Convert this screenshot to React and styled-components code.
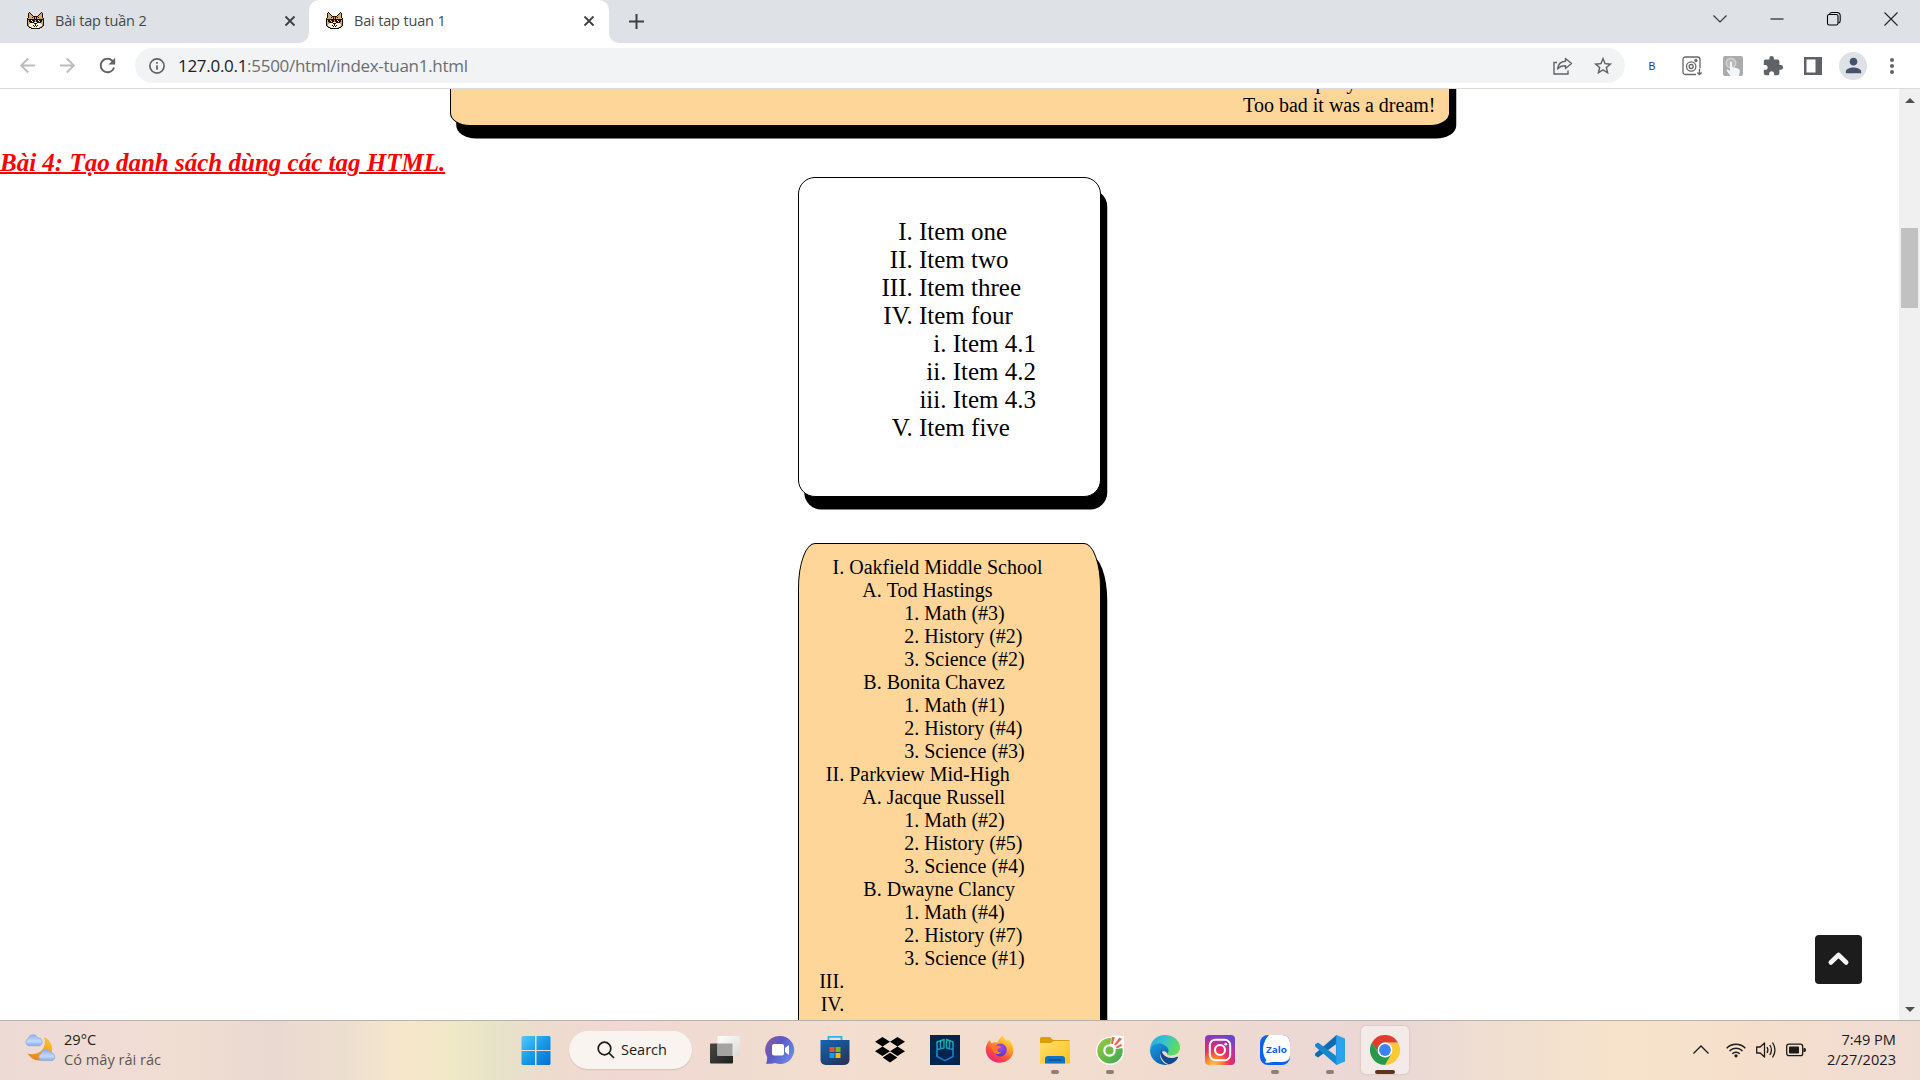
import React from "react";
import styled, { createGlobalStyle } from "styled-components";
import { MdArrowBack, MdArrowForward, MdRefresh, MdExtension, MdPerson, MdStarBorder } from "react-icons/md";

const GlobalStyle = createGlobalStyle`
  * { box-sizing: border-box; }
  html, body { margin: 0; padding: 0; overflow: hidden; background: #fff; }
`;

const ui = `"Open Sans", "Noto Sans", sans-serif`;
const serif = `"Liberation Serif", "Times New Roman", serif`;

const Screen = styled.div`
  width: 1920px;
  height: 1080px;
  display: flex;
  flex-direction: column;
  overflow: hidden;
  font-family: ${ui};
`;

/* ---------- browser tabs ---------- */

const TabStrip = styled.div`
  height: 43px;
  flex: none;
  display: flex;
  background: #dee1e6;
`;

const Tab = styled.div`
  width: ${(p) => p.$width}px;
  height: 43px;
  flex: none;
  display: flex;
  align-items: center;
  padding: 0 ${(p) => p.$end}px 2px ${(p) => p.$indent}px;
  border-radius: 10px 10px 0 0;
  background: ${(p) => (p.$active ? "#fff" : "transparent")};
`;

const TabTitle = styled.span`
  flex: 1;
  margin-left: 11px;
  font-size: 14.5px;
  letter-spacing: -0.16px;
  color: #45494d;
  white-space: nowrap;
`;

const TabFoot = styled.svg`
  width: 10px;
  height: 10px;
  flex: none;
  align-self: flex-end;
  display: block;
`;

const WindowButtons = styled.div`
  margin-left: auto;
  display: flex;
  align-items: center;
  height: 37px;
  gap: 43px;
  padding-right: 22px;
`;

const Glyph = styled.svg`
  display: block;
  flex: none;
  overflow: visible;
`;

const NewTab = styled.div`
  display: flex;
  align-items: center;
  padding: 0 0 1px 10px;
`;

/* ---------- toolbar ---------- */

const Toolbar = styled.div`
  height: 46px;
  flex: none;
  display: flex;
  align-items: center;
  background: #fff;
  border-bottom: 1px solid #dadbdd;
`;

const NavButtons = styled.div`
  width: 135px;
  display: flex;
  align-items: center;
  gap: 17px;
  padding-left: 16px;
  svg { display: block; width: 23px; height: 23px; }
`;

const Omnibox = styled.div`
  width: 1490px;
  height: 35px;
  display: flex;
  align-items: center;
  padding: 0 11px 0 14px;
  border-radius: 18px;
  background: #f1f3f4;
`;

const Address = styled.span`
  flex: 1;
  margin-left: 13px;
  font-size: 17px;
  letter-spacing: -0.29px;
  color: #6a6e73;
  white-space: nowrap;
  b { font-weight: 400; color: #202124; }
`;

const OmniActions = styled.div`
  display: flex;
  align-items: center;
  gap: 19px;
  color: #5f6368;
`;

const Extensions = styled.div`
  display: flex;
  align-items: center;
  margin-left: 18px;
  color: #5f6368;
`;

const Slot = styled.div`
  width: ${(p) => p.$width}px;
  display: flex;
  justify-content: center;
  align-items: center;
`;

const LetterIcon = styled.span`
  font: 400 10.5px "Liberation Sans", sans-serif;
  color: #2f28c8;
`;

const Avatar = styled.div`
  width: 28px;
  height: 28px;
  border-radius: 50%;
  display: flex;
  align-items: center;
  justify-content: center;
  background: #dee1e6;
  color: #47536a;
`;

/* ---------- page ---------- */

const Viewport = styled.div`
  flex: 1;
  min-height: 0;
  display: flex;
  overflow: hidden;
  background: #fff;
`;

const Page = styled.main`
  width: 1899px;
  display: flex;
  flex-direction: column;
  align-items: center;
  position: relative;
  font-family: ${serif};
  color: #000;
`;

const Panel = styled.section`
  flex: none;
  width: ${(p) => p.$width}px;
  height: ${(p) => p.$height}px;
  margin: ${(p) => p.$margin};
  padding: ${(p) => p.$pad};
  border: 1px solid #000;
  border-radius: ${(p) => p.$radius};
  background: ${(p) => p.$fill};
  box-shadow: 6.25px 12.5px #000;
`;

const Poem = styled.div`
  height: 100%;
  display: flex;
  flex-direction: column;
  justify-content: flex-end;
  text-align: right;
  font-size: 20px;
  line-height: 23px;
`;

const PoemLine = styled.span`
  padding-right: ${(p) => p.$inset || 0}px;
`;

const Heading = styled.h2`
  flex: none;
  align-self: flex-start;
  margin: 22px 0 0;
  height: 29px;
  font-size: 25px;
  line-height: 30px;
  font-style: italic;
  font-weight: 700;
  white-space: nowrap;
  color: #f00;
  text-decoration: underline;
  text-decoration-thickness: 2px;
`;

const List = styled.ol`
  margin: 0;
  padding-left: ${(p) => p.$indent}px;
  list-style-type: ${(p) => p.$marker};
  font-size: ${(p) => p.$size}px;
  line-height: ${(p) => p.$line}px;
  white-space: nowrap;
`;

const ScrollTrack = styled.div`
  width: 21px;
  flex: none;
  display: flex;
  flex-direction: column;
  align-items: center;
  padding: 9px 0 8px;
  background: #f0f0f0;
`;

const ScrollThumb = styled.div`
  width: 17px;
  height: 80px;
  margin: 125px 0 auto;
  background: #c1c1c1;
`;

const ToTop = styled.button`
  position: absolute;
  right: 37px;
  bottom: 36px;
  width: 47px;
  height: 49px;
  padding: 0 0 2px;
  border: 0;
  border-radius: 4px;
  display: flex;
  align-items: center;
  justify-content: center;
  background: #1c1c1c;
`;

/* ---------- taskbar ---------- */

const Taskbar = styled.footer`
  height: 60px;
  flex: none;
  display: flex;
  align-items: center;
  padding-bottom: 1px;
  border-top: 1px solid #bcb2ad;
  background: linear-gradient(90deg, #eedad5 0, #f0dcd5 110px, #f0ddd2 180px, #ead9d1 270px, #ecdecf 340px, #f6e7cc 400px, #f1e9c6 450px, #e7e3c8 495px, #eddcce 540px, #f1d8d3 620px, #f0dbd1 720px, #f3dece 880px, #f2dccf 1120px, #ecd8d4 1320px, #ead8d6 1400px, #f0dfd0 1500px, #f7e3cb 1620px, #f5dfcc 1760px, #efdcd4 1920px);
`;

const Weather = styled.div`
  width: 512px;
  display: flex;
  align-items: center;
  padding: 0 0 2px 25px;
  gap: 9px;
`;

const TwoLines = styled.div`
  display: flex;
  flex-direction: column;
  font-size: 14.6px;
  line-height: 20px;
  color: #1b1b1b;
  white-space: nowrap;
  text-align: ${(p) => p.$align || "left"};
`;

const Muted = styled.span`
  color: #5d5653;
`;

const Search = styled.div`
  width: 123px;
  height: 38px;
  margin: 0 9px 0 2px;
  display: flex;
  align-items: center;
  padding: 0 0 1px 28px;
  gap: 6px;
  border-radius: 19px;
  background: #faf4f1;
  box-shadow: 0 1px 1px rgba(150, 110, 100, 0.25);
  font-size: 14.5px;
  color: #1b1b1b;
`;

const App48 = styled.div`
  width: 48px;
  height: 48px;
  flex: none;
  margin-right: 7px;
  display: grid;
  grid-template-rows: 9px 30px 5px 4px;
  justify-items: center;
  border-radius: 5px;
  background: ${(p) => (p.$focused ? "#f4eae8" : "transparent")};
  box-shadow: ${(p) => (p.$focused ? "0 0 1px 1px rgba(200,180,175,0.35)" : "none")};
  svg { grid-row: 2; display: block; width: 30px; height: 30px; }
`;

const Running = styled.i`
  grid-row: 4;
  width: ${(p) => (p.$focused ? 20 : 8)}px;
  height: 4px;
  border-radius: 2px;
  background: ${(p) => (p.$focused ? "#5b3524" : "#8a7f7b")};
`;

const Tray = styled.div`
  margin-left: auto;
  display: flex;
  align-items: center;
  padding: 0 24px 2px 0;
`;

const TrayIcons = styled.div`
  display: flex;
  align-items: center;
  gap: 10px;
  margin: 2px 21px 0 0;
`;

const Overflow = styled.div`
  margin-right: 7px;
`;

/* ---------- drawings ---------- */

const catRows = [
  "..k...........k..",
  ".kok.........kok.",
  ".kook.......kook.",
  ".koook.....koook.",
  ".kooookkkkkooook.",
  ".koookokokokoook.",
  "kooooookokoooooook".slice(0, 16) + "k",
  "kkkkkkkkkkkkkkkkk",
  "kokkwkkkokkwkkkok",
  "kokkkwkkokkkwkkok",
  "kookkkkwwwkkkkook",
  "koswwwwkkkwwwwsok",
  "kswwwwwwkwwwwwwsk",
  "kswwwwkwkwkwwwwsk",
  ".kswwwwkwkwwwwsk.",
  "..kkswwwwwwwskk..",
  "....kkkkkkkkk....",
];
const catInk = { k: "#17150f", o: "#d8ab6d", w: "#f5efe2", s: "#b58a55" };

function Cat() {
  return (
    <Glyph width="17" height="17" viewBox="0 0 17 17" shapeRendering="crispEdges">
      {catRows.flatMap((row, y) =>
        [...row].map((c, x) =>
          c === "." ? null : <rect key={`${x}-${y}`} x={x} y={y} width="1" height="1" fill={catInk[c]} />
        )
      )}
    </Glyph>
  );
}

const CloseX = () => (
  <Glyph width="10" height="10" viewBox="0 0 10 10" stroke="#3c4043" strokeWidth="1.8">
    <path d="M0.5 0.5l9 9M9.5 0.5l-9 9" />
  </Glyph>
);

const Cloud = ({ x, y, s }) => (
  <g transform={`translate(${x} ${y}) scale(${s})`}>
    <path d="M4 11a3.7 3.7 0 0 1-.4-7A5 5 0 0 1 13 3.200a4 4 0 0 1 1.500 7.800z" fill="url(#cloud)" stroke="#84a6e6" strokeWidth=".7" />
  </g>
);

const WeatherIcon = () => (
  <Glyph width="30" height="30" viewBox="0 0 30 30">
    <defs>
      <linearGradient id="cloud" x1="0" y1="0" x2="0" y2="1">
        <stop offset="0" stopColor="#8fb2ee" />
        <stop offset=".6" stopColor="#c4dafb" />
        <stop offset="1" stopColor="#86a8ea" />
      </linearGradient>
      <linearGradient id="moon" x1="0" y1="1" x2=".5" y2="0">
        <stop offset="0" stopColor="#f07a12" />
        <stop offset="1" stopColor="#f3c02f" />
      </linearGradient>
    </defs>
    <path d="M19 3c7 3 10 11 7 17.500A14 14 0 0 1 2.500 19.500C8 21 14 20 17.500 15.500 20 12 20.500 7 19 3z" fill="url(#moon)" />
    <Cloud x={-0.5} y={0.5} s={1.02} />
    <Cloud x={12.5} y={15.6} s={1} />
  </Glyph>
);

const WindowsLogo = () => (
  <svg viewBox="0 0 30 30">
    <defs>
      <linearGradient id="win" gradientUnits="userSpaceOnUse" x1="0" y1="0" x2="29" y2="29">
        <stop offset="0" stopColor="#52d0fb" />
        <stop offset=".5" stopColor="#1c9be8" />
        <stop offset="1" stopColor="#0670cf" />
      </linearGradient>
    </defs>
    <path d="M1.500 1H14v14H.5V2zM15.500 1h13l1 1v13h-14zM.5 16H14v14H1.500l-1-1zM15.500 16h14v13l-1 1h-13z" fill="url(#win)" />
  </svg>
);

const TaskView = () => (
  <svg viewBox="0 0 30 30">
    <defs>
      <linearGradient id="tvd" x1="0" y1="0" x2="1" y2="1"><stop offset="0" stopColor="#484846" /><stop offset="1" stopColor="#20201f" /></linearGradient>
      <linearGradient id="tvl" x1="0" y1="0" x2="1" y2="1"><stop offset="0" stopColor="#fff" /><stop offset="1" stopColor="#dcd9d8" /></linearGradient>
    </defs>
    <rect x="0" y="8.500" width="23" height="20" rx="1" fill="url(#tvd)" />
    <rect x="7.500" y="1" width="22.500" height="20" rx="1" fill="url(#tvl)" />
    <rect x="7.500" y="8.500" width="15" height="12.500" fill="#a5a3a1" />
  </svg>
);

const Chat = () => (
  <svg viewBox="0 0 30 30">
    <defs>
      <linearGradient id="chat" x1="0" y1="0" x2="1" y2=".6"><stop offset="0" stopColor="#91569b" /><stop offset=".5" stopColor="#5a5bc4" /><stop offset="1" stopColor="#6a86e6" /></linearGradient>
    </defs>
    <path d="M15 1a14 14 0 1 1-5 27c-3 .8-6 1-9 .8 1-2.500 1.500-5 1-7A14 14 0 0 1 15 1z" fill="url(#chat)" />
    <rect x="7" y="9" width="12" height="11.500" rx="2" fill="#fff" />
    <path d="M20 13l4-3v10l-4-3z" fill="#fff" />
  </svg>
);

const Store = () => (
  <svg viewBox="0 0 30 30">
    <defs>
      <linearGradient id="store" x1="0" y1="0" x2=".6" y2="1"><stop offset="0" stopColor="#1068b8" /><stop offset="1" stopColor="#27365f" /></linearGradient>
    </defs>
    <path d="M8.500 6V1.800h13V6" fill="none" stroke="#27b6ee" strokeWidth="1.800" />
    <path d="M.5 5h29v20a5 5 0 0 1-5 5h-19a5 5 0 0 1-5-5z" fill="url(#store)" />
    <path d="M9.500 12h5v5h-5z" fill="#f25022" />
    <path d="M15.500 12h5v5h-5z" fill="#7fba00" />
    <path d="M9.500 18h5v5h-5z" fill="#00a4ef" />
    <path d="M15.500 18h5v5h-5z" fill="#ffb900" />
  </svg>
);

const Dropbox = () => (
  <svg viewBox="0 0 30 30">
    <path d="M7.500 2l7.500 4.700-7.500 4.700L0 6.700zM22.500 2L30 6.700l-7.500 4.700L15 6.700zM7.500 11.600l7.500 4.700L7.500 21 0 16.300zM22.500 11.600l7.500 4.700-7.500 4.700-7.500-4.700zM15 17.800l7.300 4.600L15 27.400l-7.300-5z" fill="#000" />
  </svg>
);

const GGShield = () => (
  <svg viewBox="0 0 30 30">
    <defs><linearGradient id="gg" gradientUnits="userSpaceOnUse" x1="0" y1="4" x2="0" y2="26"><stop offset="0" stopColor="#14b5a8" /><stop offset="1" stopColor="#1673d8" /></linearGradient></defs>
    <rect width="30" height="30" fill="#04254b" />
    <g fill="none" stroke="url(#gg)" strokeWidth="1.500" strokeLinejoin="round">
      <path d="M7 21V7l7-2.500v8.500L7 14.500" />
      <path d="M23 14.500L16.500 13V4.500L23 7v14.500l-8 4.200-8-4.200v-3l0 0M10.500 6v7.500M19.500 6v7.500" />
    </g>
  </svg>
);

const Firefox = () => (
  <svg viewBox="0 0 30 30">
    <defs>
      <linearGradient id="ff" x1=".85" y1="0" x2=".25" y2="1"><stop offset="0" stopColor="#fff14a" /><stop offset=".4" stopColor="#ffa02a" /><stop offset=".7" stopColor="#ff4a3f" /><stop offset="1" stopColor="#e3218a" /></linearGradient>
      <radialGradient id="ffg" cx=".5" cy=".3" r=".8"><stop offset="0" stopColor="#a64bf4" /><stop offset="1" stopColor="#4a39b8" /></radialGradient>
    </defs>
    <path d="M4.500 5l2 3.200c1.500-1 4-1.200 6-.9C13.500 5 15 3 18 0c.5 3 2 4 4 6l1-2c4 4 6 8 5.500 12.500A14 13.500 0 0 1 .8 16C.5 11.500 2 8 4.500 5z" fill="url(#ff)" />
    <circle cx="15.300" cy="15" r="6.400" fill="url(#ffg)" />
    <path d="M5 10.500c2.500-1.800 6-1.200 7.500.6l3.500.4c-.5 1.800-3 2-3.500 3.200-.3 1.500 1.500 2.800 3.500 2.500-1.500 2.500-6 2.500-7.500-.5-1-2-2-4-3.500-6.200z" fill="#ff7a2e" />
  </svg>
);

const Folder = () => (
  <svg viewBox="0 0 30 30">
    <defs><linearGradient id="fold" x1="0" y1="0" x2="1" y2="1"><stop offset="0" stopColor="#ffdf6b" /><stop offset="1" stopColor="#fcc21f" /></linearGradient></defs>
    <path d="M0 3.500Q0 2 1.500 2h8c1.500 0 2.500 3 4 3h15Q30 5 30 6.500V10H0z" fill="#dc9d06" />
    <path d="M0 8h10c2 0 2.500-2 4-2h16v21.500q0 1-1 1H1q-1 0-1-1z" fill="url(#fold)" />
    <path d="M5 28.500V24q0-3 3-3h14q3 0 3 3v4.500z" fill="#1173c8" />
    <path d="M8.500 25h13" stroke="#0b4a85" strokeWidth="1.200" />
  </svg>
);

const CocCoc = () => (
  <svg viewBox="0 0 30 30">
    <defs><linearGradient id="cc" x1="0" y1="0" x2="1" y2="1"><stop offset="0" stopColor="#9bcc3d" /><stop offset="1" stopColor="#37a854" /></linearGradient></defs>
    <circle cx="15" cy="16" r="14" fill="#fff" />
    <path d="M16 13l1-12.500 12 .5v13z" fill="#fff" />
    <circle cx="15" cy="15.800" r="12.700" fill="url(#cc)" />
    <path d="M14.500 15l2-14 12 0-.5 12z" fill="#fff" />
    <circle cx="14.500" cy="15.500" r="6.200" fill="#fff" />
    <circle cx="14.500" cy="15.500" r="4" fill="#6fba45" />
    <path d="M16 8.500l.8-6.500 3 .3-2 7zM19 9.500l5.500-7L27 4l-6.500 6.500zM20.800 12l5.400-3.200.8 2.200-5.200 2.500z" fill="#f0624d" />
  </svg>
);

const Edge = () => (
  <svg viewBox="0 0 30 30">
    <defs>
      <linearGradient id="e1" x1="0" y1="0" x2="1" y2=".4"><stop offset="0" stopColor="#2aa5dc" /><stop offset=".5" stopColor="#36c3cf" /><stop offset="1" stopColor="#5fdc5c" /></linearGradient>
      <linearGradient id="e2" x1="0" y1="0" x2=".6" y2="1"><stop offset="0" stopColor="#1b9de2" /><stop offset="1" stopColor="#0c5fae" /></linearGradient>
    </defs>
    <path d="M0 14C1 5 7 0 15 0c9 0 15 6 15 12.500 0 5-4 8-9 8-3 0-5-1-4-2.500C20 14 16 9 10 9c-5 0-8 2-10 5z" fill="url(#e1)" />
    <path d="M0 14.500C1.500 10 6 8 10 8.500c5 .5 8.500 4 8.500 7 0 1.500-.5 2.500-1.300 3C14 13 8 18 11 24c1.500 3 4 5 7 5.700C8 31.500-.5 24 0 14.500z" fill="url(#e2)" />
    <path d="M11.500 14.500C8.500 19 12 27 19 29.500c4-1 7.500-3.500 9-7 .3-.8-.5-1-1-.7-5 2.500-12 1-14.500-3.500-.7-1.300-1-2.500-1-3.800z" fill="#114a8b" />
  </svg>
);

const Insta = () => (
  <svg viewBox="0 0 30 30">
    <defs>
      <radialGradient id="ig" cx=".28" cy="1.05" r="1.100"><stop offset="0" stopColor="#ffd35a" /><stop offset=".25" stopColor="#fb8a33" /><stop offset=".5" stopColor="#e6305f" /><stop offset=".75" stopColor="#bb2f9b" /><stop offset="1" stopColor="#6747cf" /></radialGradient>
    </defs>
    <rect width="30" height="30" rx="4" fill="url(#ig)" />
    <rect x="4.800" y="4.800" width="20.400" height="20.400" rx="5.500" fill="none" stroke="#fff" strokeWidth="2" />
    <circle cx="15" cy="15" r="5" fill="none" stroke="#fff" strokeWidth="2.100" />
    <circle cx="20.800" cy="9.200" r="1.400" fill="#fff" />
  </svg>
);

const Zalo = () => (
  <svg viewBox="0 0 30 30">
    <rect width="30" height="30" rx="8" fill="#0b62f2" />
    <path d="M9 0h13a8 8 0 0 1 8 8v12q0 7-8 7H12c-2 .8-5 1.200-7 .3l1.500-2.300C2 21 1 8 9 0z" fill="#fff" />
    <text x="16.500" y="17.500" textAnchor="middle" fontFamily="Open Sans, sans-serif" fontWeight="700" fontSize="9.400" textLength="21" lengthAdjust="spacingAndGlyphs" fill="#0b62f2">Zalo</text>
  </svg>
);

const VSCode = () => (
  <svg viewBox="0 0 30 30">
    <path d="M22 8.500L3 22.500 0 20.500l.2-2L21.500 0z" fill="#0b6cb4" />
    <path d="M22 21.500L3 7.500 0 9.500l.2 2L21.500 30z" fill="#1587cf" />
    <path d="M21.500 0L30 3.500v23L21.500 30z" fill="#2ba2ee" />
    <path d="M21.500 0v30" stroke="#2496e2" strokeWidth="1.200" />
  </svg>
);

const Chrome = () => (
  <svg viewBox="0 0 30 30">
    <path d="M28 7.500A15 15 0 0 1 15 30L21.500 18.700 15 7.500z" fill="#fcc934" />
    <path d="M2 7.500A15 15 0 0 0 15 30l6.500-11.200-13-.1z" fill="#269a4a" />
    <path d="M2 7.500l6.500 11.200L15 15V7.500z" fill="#269a4a" />
    <path d="M2 7.500A15 15 0 0 1 28 7.500H15a7.500 7.500 0 0 0-7.300 5.600L6 13.500z" fill="#e33b2e" />
    <circle cx="15" cy="15" r="7.400" fill="#fff" />
    <circle cx="15" cy="15" r="5.900" fill="#3b83ee" />
  </svg>
);

const ScrollArrow = ({ down }) => (
  <Glyph width="10" height="5" viewBox="0 0 10 5" fill="#505050">
    <path d={down ? "M0 0h10L5 5z" : "M0 5h10L5 0z"} />
  </Glyph>
);

/* ---------- data ---------- */

const apps = [
  { icon: WindowsLogo },
  { icon: TaskView },
  { icon: Chat },
  { icon: Store },
  { icon: Dropbox },
  { icon: GGShield },
  { icon: Firefox },
  { icon: Folder, running: true },
  { icon: CocCoc, running: true },
  { icon: Edge },
  { icon: Insta },
  { icon: Zalo, running: true },
  { icon: VSCode, running: true },
  { icon: Chrome, running: true, focused: true },
];

const schools = [
  {
    name: "Oakfield Middle School",
    teachers: [
      ["Tod Hastings", ["Math (#3)", "History (#2)", "Science (#2)"]],
      ["Bonita Chavez", ["Math (#1)", "History (#4)", "Science (#3)"]],
    ],
  },
  {
    name: "Parkview Mid-High",
    teachers: [
      ["Jacque Russell", ["Math (#2)", "History (#5)", "Science (#4)"]],
      ["Dwayne Clancy", ["Math (#4)", "History (#7)", "Science (#1)"]],
    ],
  },
];

function TaskApp({ app }) {
  const Icon = app.icon;
  return (
    <App48 $focused={app.focused}>
      <Icon />
      {app.running && <Running $focused={app.focused} />}
    </App48>
  );
}

export default function App() {
  const [start, ...pinned] = apps;
  return (
    <Screen>
      <GlobalStyle />
      <TabStrip>
        <Tab $width={299} $indent={27} $end={4}>
          <Cat />
          <TabTitle>Bài tap tuần 2</TabTitle>
          <CloseX />
        </Tab>
        <TabFoot viewBox="0 0 10 10"><path d="M10 0v10H0A10 10 0 0 0 10 0z" fill="#fff" /></TabFoot>
        <Tab $active $width={300} $indent={17} $end={15}>
          <Cat />
          <TabTitle>Bai tap tuan 1</TabTitle>
          <CloseX />
        </Tab>
        <TabFoot viewBox="0 0 10 10"><path d="M0 0v10h10A10 10 0 0 1 0 0z" fill="#fff" /></TabFoot>
        <NewTab>
          <Glyph width="15" height="15" viewBox="0 0 15 15" stroke="#3c4043" strokeWidth="2">
            <path d="M7.500 0v15M0 7.500h15" />
          </Glyph>
        </NewTab>
        <WindowButtons>
          <Glyph width="14" height="14" viewBox="0 0 14 14" fill="none" stroke="#333" strokeWidth="1.100">
            <path d="M.5 3.500L7 10l6.500-6.500" />
          </Glyph>
          <Glyph width="14" height="14" viewBox="0 0 14 14" stroke="#000" strokeWidth="1">
            <path d="M.5 7h13" />
          </Glyph>
          <Glyph width="14" height="14" viewBox="0 0 14 14" fill="none" stroke="#000" strokeWidth="1.100">
            <rect x=".5" y="2.500" width="10.500" height="10.500" rx="1.800" />
            <path d="M2.500 2.300Q3 .5 5 .5h5Q13.200.5 13.200 3.800v5q0 2-1.800 2.500" />
          </Glyph>
          <Glyph width="14" height="14" viewBox="0 0 14 14" stroke="#222" strokeWidth="1.100">
            <path d="M.5.5l13 13M13.500.5l-13 13" />
          </Glyph>
        </WindowButtons>
      </TabStrip>

      <Toolbar>
        <NavButtons>
          <MdArrowBack color="#babcbe" />
          <MdArrowForward color="#babcbe" />
          <MdRefresh color="#5f6368" />
        </NavButtons>
        <Omnibox>
          <Glyph width="16" height="16" viewBox="0 0 16 16" fill="none" stroke="#5f6368" strokeWidth="1.700">
            <circle cx="8" cy="8" r="7.100" />
            <path d="M8 7.200v4.600M8 4v1.800" />
          </Glyph>
          <Address><b>127.0.0.1</b>:5500/html/index-tuan1.html</Address>
          <OmniActions>
            <Glyph width="20" height="18" viewBox="0 0 20 18" fill="none" stroke="#5f6368" strokeWidth="1.400">
              <path d="M4 5.500H1v11.500h14v-3.500" />
              <path d="M12.500 1.500l6 5-6 5V8.800C9 8.800 6.500 9.500 4.500 12 5 7.500 8 4.500 12.500 4.200z" strokeLinejoin="round" />
            </Glyph>
            <MdStarBorder size={22} />
          </OmniActions>
        </Omnibox>
        <Extensions>
          <Slot $width={18}><LetterIcon>B</LetterIcon></Slot>
          <Slot $width={62}>
            <Glyph width="20" height="20" viewBox="0 0 20 20" fill="none" stroke="#666" strokeWidth="1.300">
              <path d="M14 18.500H3.500q-2.500 0-2.500-2.500V3.500Q1 1 3.500 1h12Q18 1 18 3.500v9" />
              <circle cx="9.200" cy="10.500" r="4.700" />
              <circle cx="9.200" cy="10.500" r="2" />
              <circle cx="14" cy="4.500" r="1" />
              <path d="M17.500 13v5.500M15.300 16.500l2.200 2 2.200-2" />
            </Glyph>
          </Slot>
          <Slot $width={20}>
            <Glyph width="20" height="20" viewBox="0 0 20 20">
              <rect width="20" height="20" rx="2" fill="#ababab" />
              <circle cx="8" cy="7" r="5.600" fill="#cfcfcf" />
              <circle cx="8" cy="7" r="3.800" fill="#b9b9b9" />
              <path d="M7 6q1-1 2 0v5l6 1.500q2 .5 1.800 2.500L16 20H7.500L3.500 14.500q.5-1.500 2-.5L7 15z" fill="#f1f6fb" />
            </Glyph>
          </Slot>
          <Slot $width={60}><MdExtension size={22} /></Slot>
          <Slot $width={19}>
            <Glyph width="18" height="18" viewBox="0 0 18 18">
              <path d="M0 0h18v18H0zM2.500 2.500v13h9v-13z" fill="#5f6368" fillRule="evenodd" />
            </Glyph>
          </Slot>
          <Slot $width={62}><Avatar><MdPerson size={23} /></Avatar></Slot>
          <Slot $width={16}>
            <Glyph width="4" height="16" viewBox="0 0 4 16" fill="#5f6368">
              <circle cx="2" cy="2" r="2" /><circle cx="2" cy="8" r="2" /><circle cx="2" cy="14" r="2" />
            </Glyph>
          </Slot>
        </Extensions>
      </Toolbar>

      <Viewport>
        <Page>
          <Panel $width={1000} $height={237} $margin="-200px 0 0" $radius="20px / 13px" $fill="#ffd699" $pad="0 13px 8px">
            <Poem>
              <PoemLine $inset={79}>party</PoemLine>
              <PoemLine>Too bad it was a dream!</PoemLine>
            </Poem>
          </Panel>
          <Heading>Bài 4: Tạo danh sách dùng các tag HTML.</Heading>
          <Panel $width={303} $height={320} $margin="0" $radius="17px" $fill="#fff" $pad="40px 0 0">
            <List $marker="upper-roman" $indent={120} $size={25} $line={28}>
              <li>Item one</li>
              <li>Item two</li>
              <li>Item three</li>
              <li>
                Item four
                <List $marker="lower-roman" $indent={33.75} $size={25} $line={28}>
                  <li>Item 4.1</li>
                  <li>Item 4.2</li>
                  <li>Item 4.3</li>
                </List>
              </li>
              <li>Item five</li>
            </List>
          </Panel>
          <Panel $width={303} $height={800} $margin="46px 0 0" $radius="17px / 45px" $fill="#ffd699" $pad="12px 0 0">
            <List $marker="upper-roman" $indent={50.2} $size={20} $line={23}>
              {schools.map((school) => (
                <li key={school.name}>
                  {school.name}
                  <List $marker="upper-alpha" $indent={37.5} $size={20} $line={23}>
                    {school.teachers.map(([teacher, classes]) => (
                      <li key={teacher}>
                        {teacher}
                        <List $marker="decimal" $indent={37.5} $size={20} $line={23}>
                          {classes.map((c) => <li key={c}>{c}</li>)}
                        </List>
                      </li>
                    ))}
                  </List>
                </li>
              ))}
              <li />
              <li />
            </List>
          </Panel>
          <ToTop aria-label="Back to top">
            <Glyph width="21" height="14" viewBox="0 0 21 14" fill="none" stroke="#f5f5f5" strokeWidth="4.600" strokeLinecap="round" strokeLinejoin="round">
              <path d="M2.800 10.500L10.500 3l7.700 7.500" />
            </Glyph>
          </ToTop>
        </Page>
        <ScrollTrack>
          <ScrollArrow />
          <ScrollThumb />
          <ScrollArrow down />
        </ScrollTrack>
      </Viewport>

      <Taskbar>
        <Weather>
          <WeatherIcon />
          <TwoLines>
            <span>29°C</span>
            <Muted>Có mây rải rác</Muted>
          </TwoLines>
        </Weather>
        <TaskApp app={start} />
        <Search>
          <Glyph width="18" height="18" viewBox="0 0 18 18" fill="none" stroke="#1b1b1b" strokeWidth="1.700">
            <circle cx="7.500" cy="7.500" r="6.300" />
            <path d="M12 12l5 5" />
          </Glyph>
          Search
        </Search>
        {pinned.map((app, i) => <TaskApp key={i} app={app} />)}
        <Tray>
          <TrayIcons>
            <Overflow>
              <Glyph width="16" height="20" viewBox="0 0 16 20" fill="none" stroke="#1b1b1b" strokeWidth="1.300">
                <path d="M.5 13.500L8 6l7.500 7.500" />
              </Glyph>
            </Overflow>
            <Glyph width="20" height="16" viewBox="0 0 20 16" fill="none" stroke="#1b1b1b" strokeWidth="1.500">
              <path d="M.7 6.200a13 13 0 0 1 18.600 0M3.500 9a9.200 9.200 0 0 1 13 0M6.300 11.800a5.300 5.300 0 0 1 7.400 0" />
              <circle cx="10" cy="13.800" r="1.600" fill="#1b1b1b" stroke="none" />
            </Glyph>
            <Glyph width="20" height="18" viewBox="0 0 20 18" fill="none" stroke="#1b1b1b" strokeWidth="1.300">
              <path d="M.7 6h3.500L8.500 2v14L4.200 12H.7z" strokeLinejoin="round" />
              <path d="M11 6q1.800 3 0 6M13.800 4q3.300 5 0 10M16.500 1.500q5 7.500 0 15" />
            </Glyph>
            <Glyph width="20" height="14" viewBox="0 0 20 14" fill="none" stroke="#1b1b1b" strokeWidth="1.300">
              <rect x=".7" y="1.200" width="16" height="11.400" rx="2.200" />
              <rect x="3" y="3.500" width="10" height="7" rx=".8" fill="#1b1b1b" stroke="none" />
              <path d="M17.500 5h1q1.500 0 1.500 2t-1.500 2h-1z" fill="#1b1b1b" stroke="none" />
            </Glyph>
          </TrayIcons>
          <TwoLines $align="right">
            <span>7:49 PM</span>
            <span>2/27/2023</span>
          </TwoLines>
        </Tray>
      </Taskbar>
    </Screen>
  );
}
